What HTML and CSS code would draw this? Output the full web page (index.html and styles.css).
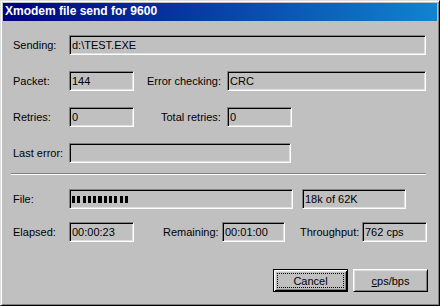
FILE: index.html
```html
<!DOCTYPE html>
<html lang="en">
<head>
<meta charset="UTF-8">
<meta name="viewport" content="width=device-width, initial-scale=1.0">
<title>Xmodem file send</title>
<link rel="stylesheet" href="styles.css">
</head>
<body>

<div class="window">
    <div class="titlebar">
        <span class="title">Xmodem file send for 9600</span>
    </div>

    <div class="content">
        <div class="row">
            <span class="label">Sending:</span>
            <span class="field sending">d:\TEST.EXE</span>
        </div>
        <div class="row">
            <span class="label">Packet:</span>
            <span class="field small">144</span>
            <span class="label error-label">Error checking:</span>
            <span class="field crc">CRC</span>
        </div>
        <div class="row">
            <span class="label">Retries:</span>
            <span class="field small">0</span>
            <span class="label total-label">Total retries:</span>
            <span class="field small">0</span>
        </div>
        <div class="row">
            <span class="label">Last error:</span>
            <span class="field last-error"></span>
        </div>

        <div class="separator"></div>

        <div class="row file-row">
            <span class="label">File:</span>
            <span class="field progress">
                <span class="progress-bar" style="width: 56px"></span>
            </span>
            <span class="field size">18k of 62K</span>
        </div>
        <div class="row time-row">
            <span class="label">Elapsed:</span>
            <span class="field small">00:00:23</span>
            <span class="label remaining-label">Remaining:</span>
            <span class="field remaining">00:01:00</span>
            <span class="label throughput-label">Throughput:</span>
            <span class="field small">762 cps</span>
        </div>

        <div class="buttons">
            <button class="btn default">Cancel</button>
            <button class="btn"><u>c</u>ps/bps</button>
        </div>
    </div>
</div>

</body>
</html>
```

FILE: styles.css
```css
* {
    box-sizing: border-box;
    margin: 0;
    padding: 0;
}

body {
    width: 440px;
    height: 306px;
    background: #c0c0c0;
    font-family: "Liberation Sans", Arial, sans-serif;
    font-size: 11px;
    color: #000;
}

.window {
    width: 440px;
    height: 306px;
    padding: 2px;
    background: #c0c0c0;
    border: 1px solid;
    border-color: #dfdfdf #000 #000 #dfdfdf;
    box-shadow: inset 1px 1px #fff, inset -1px -1px #808080;
}

.titlebar {
    height: 18px;
    padding-left: 2px;
    background: linear-gradient(90deg, #000080, #1084d0);
    color: #fff;
    font-weight: bold;
    font-size: 12px;
    line-height: 17px;
}

.content {
    padding: 14px 9px 0 10px;
}

.row {
    display: flex;
    align-items: center;
    height: 20px;
    margin-bottom: 16px;
}

.row > * {
    flex: none;
}

.label {
    width: 56px;
    line-height: 20px;
    white-space: nowrap;
}

.field {
    height: 20px;
    padding: 0 2px;
    line-height: 18px;
    white-space: nowrap;
    overflow: hidden;
    border: 1px solid;
    border-color: #808080 #fff #fff #808080;
    box-shadow: inset 1px 1px #000, inset -1px -1px #dfdfdf;
}

.sending { width: 357px; }
.small { width: 65px; }
.crc { width: 199px; }
.last-error { width: 222px; }

.error-label {
    width: 80px;
    margin-left: 13px;
}

.total-label {
    width: 66px;
    margin-left: 27px;
}

.separator {
    width: 415px;
    height: 2px;
    margin: -6px 0 14px -2px;
    border-top: 1px solid #808080;
    border-bottom: 1px solid #fff;
}

.file-row {
    margin-bottom: 13px;
}

.progress {
    width: 224px;
    display: flex;
    align-items: center;
    padding: 0 2px;
}

.progress-bar {
    display: block;
    height: 7px;
    background: repeating-linear-gradient(90deg, #000 0 3px, transparent 3px 5.3px);
}

.size {
    width: 104px;
    margin-left: 9px;
}

.remaining-label {
    width: 59px;
    margin-left: 29px;
}

.remaining { width: 63px; }

.throughput-label {
    width: 62px;
    margin-left: 15px;
}

.time-row {
    margin-bottom: 27px;
}

.buttons {
    display: flex;
    justify-content: flex-end;
    gap: 5px;
}

.btn {
    position: relative;
    width: 75px;
    height: 23px;
    background: #c0c0c0;
    font-family: "Liberation Sans", Arial, sans-serif;
    font-size: 11px;
    color: #000;
    border: 1px solid;
    border-color: #fff #000 #000 #fff;
    box-shadow: inset 1px 1px #dfdfdf, inset -1px -1px #808080;
}

.btn.default {
    border-color: #000;
    box-shadow: inset 1px 1px #fff, inset -1px -1px #000, inset 2px 2px #dfdfdf, inset -2px -2px #808080;
}

/* focus rectangle */
.btn.default::after {
    content: "";
    position: absolute;
    top: 3px;
    left: 3px;
    right: 3px;
    bottom: 3px;
    border: 1px dotted #000;
}
```
